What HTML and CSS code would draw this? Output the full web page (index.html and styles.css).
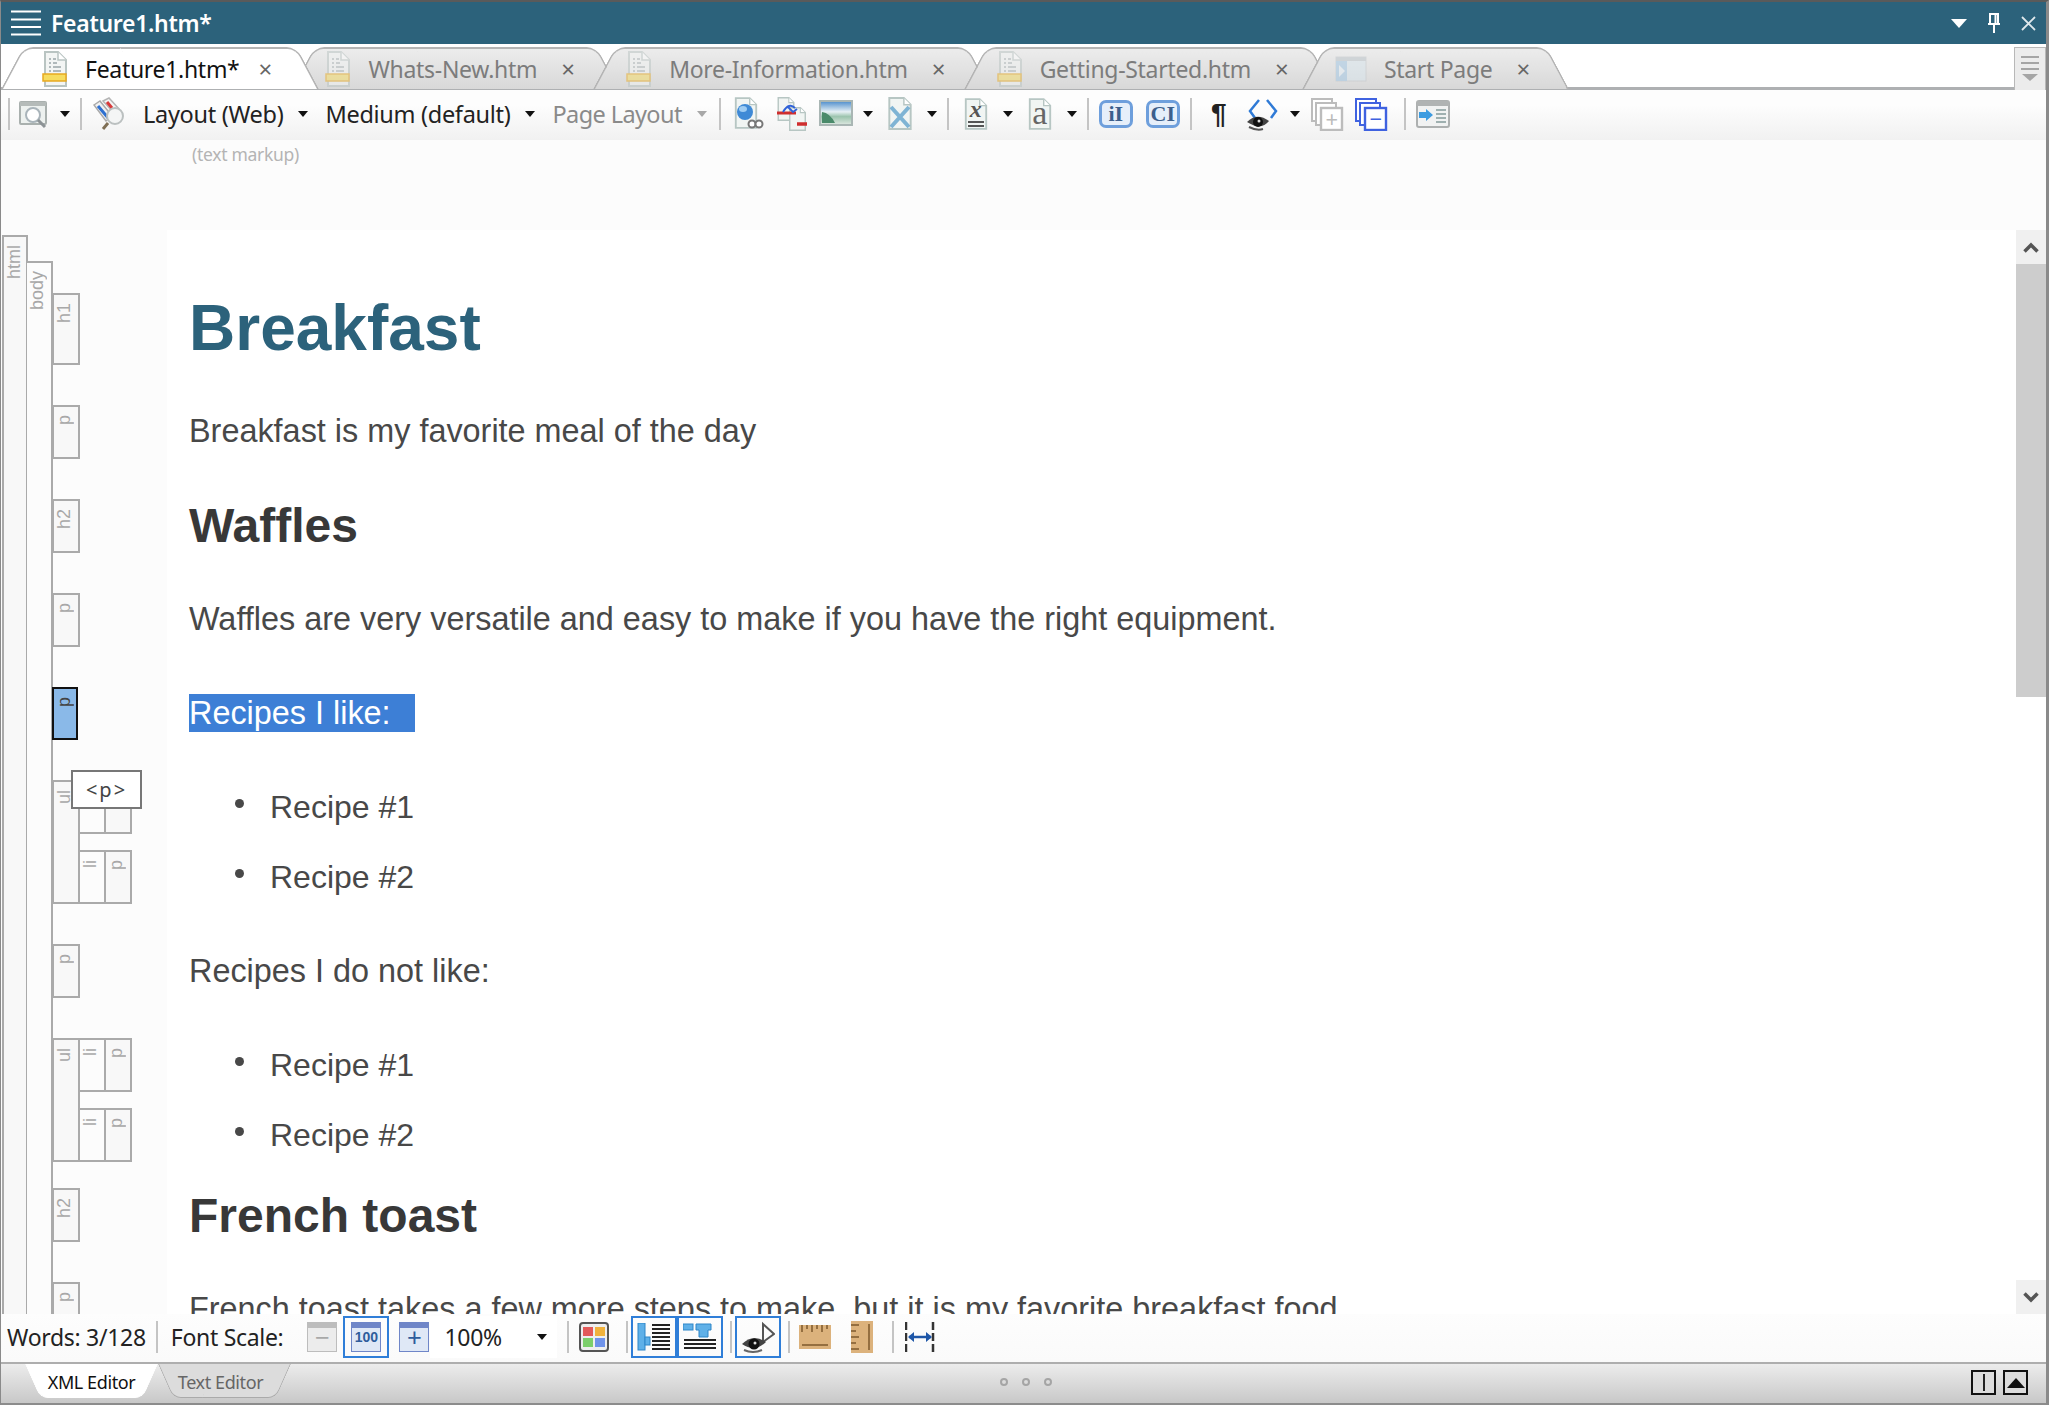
FILE: index.html
```html
<!DOCTYPE html>
<html lang="en">
<head>
    <meta charset="UTF-8">
    <title>Feature1.htm*</title>
    <link rel="stylesheet" href="styles.css">
</head>
<body>

    <svg class="sprite" xmlns="http://www.w3.org/2000/svg">
        <defs>
            <linearGradient id="sky" x1="0" y1="0" x2="0" y2="1">
                <stop offset="0" stop-color="#4a8bcb"/>
                <stop offset=".45" stop-color="#e6f0f4"/>
                <stop offset=".65" stop-color="#9cc4ae"/>
                <stop offset="1" stop-color="#dfe9e2"/>
            </linearGradient>
            <symbol id="arrow" viewBox="0 0 10 6"><path d="M0 0h10L5 6z" fill="#111"/></symbol>
            <symbol id="page" viewBox="0 0 26 36">
                <path d="M3 1h13l8 8v26H3z" fill="#f3f5f4" stroke="#b9c4c2" stroke-width="2"/>
                <path d="M16 1v8h8" fill="#fff" stroke="#b9c4c2" stroke-width="1.5"/>
                <path d="M7 8h2M11 8h3M7 12h2M11 12h4M7 16h2M11 16h8M7 20h2M11 20h8" stroke="#9aa5a8" stroke-width="1.5"/>
                <rect x="1" y="23" width="23" height="7" fill="#f6dc5f" stroke="#e8a920" stroke-width="1.5"/>
            </symbol>
            <symbol id="sheet" viewBox="0 0 28 34">
                <path d="M3 1h15l7 7v25H3z" fill="#f1f5f3" stroke="#b7c6c3" stroke-width="2"/>
                <path d="M18 1v7h7" fill="#fff" stroke="#b7c6c3" stroke-width="1.5"/>
            </symbol>
            <symbol id="stack" viewBox="0 0 34 34">
                <rect x="2" y="2" width="20" height="22" fill="#fff" stroke="currentColor" stroke-width="2"/>
                <rect x="6" y="6" width="20" height="22" fill="#fff" stroke="currentColor" stroke-width="2"/>
                <rect x="11" y="11" width="21" height="22" fill="#fff" stroke="currentColor" stroke-width="2.4"/>
            </symbol>
        </defs>
    </svg>

    <div class="app">
        <header class="title-bar">
            <svg class="hamburger" width="30" height="26" viewBox="0 0 30 26"><path d="M0 1.5h30M0 9.5h30M0 17h30M0 24.5h30" stroke="#fff" stroke-width="2"/></svg>
            <span class="title-text">Feature1.htm*</span>
            <div class="title-actions">
                <svg width="16" height="9" viewBox="0 0 16 9"><path d="M0 0h16L8 9z" fill="#fff"/></svg>
                <svg width="14" height="20" viewBox="0 0 14 20"><path d="M3 1h8v10H3zM1 11h12M7 11v9M8.500 2v8" stroke="#fff" stroke-width="2" fill="none"/></svg>
                <svg width="15" height="15" viewBox="0 0 15 15"><path d="M1 1l13 13M14 1L1 14" stroke="#dfe8ec" stroke-width="1.800"/></svg>
            </div>
        </header>

        <nav class="tab-strip">
            <div class="tab active">
                <svg class="tab-icon" width="26" height="36"><use href="#page"/></svg>
                <span class="tab-label">Feature1.htm*</span>
                <span class="tab-close">×</span>
            </div>
            <div class="tab">
                <svg class="tab-icon" width="26" height="36"><use href="#page"/></svg>
                <span class="tab-label">Whats-New.htm</span>
                <span class="tab-close">×</span>
            </div>
            <div class="tab">
                <svg class="tab-icon" width="26" height="36"><use href="#page"/></svg>
                <span class="tab-label">More-Information.htm</span>
                <span class="tab-close">×</span>
            </div>
            <div class="tab">
                <svg class="tab-icon" width="26" height="36"><use href="#page"/></svg>
                <span class="tab-label">Getting-Started.htm</span>
                <span class="tab-close">×</span>
            </div>
            <div class="tab start-tab">
                <svg class="tab-icon" width="32" height="26" viewBox="0 0 32 26"><rect x="1" y="1" width="30" height="24" fill="#d9e6ee" stroke="#c2c8cc"/><rect x="1" y="1" width="30" height="4" fill="#b9c2c8"/><rect x="1" y="5" width="11" height="20" fill="#9fc6e4"/><path d="M4 9l6 6-6 6z" fill="#e6f0f7"/></svg>
                <span class="tab-label">Start Page</span>
                <span class="tab-close">×</span>
            </div>
            <div class="overflow-btn">
                <svg width="18" height="26" viewBox="0 0 18 26"><path d="M0 1h18M0 7h18M0 13h18" stroke="#a5a5a5" stroke-width="2"/><path d="M1 18h16l-8 7z" fill="#a5a5a5"/></svg>
            </div>
        </nav>

        <div class="toolbar">
            <i class="sep"></i>
            <svg class="tool first" width="34" height="32" viewBox="0 0 34 32"><rect x="4" y="4" width="26" height="22" rx="1" fill="#edf1ef" stroke="#a9b0ae" stroke-width="2"/><rect x="4" y="4" width="26" height="4" fill="#b5bbb9"/><circle cx="17" cy="17" r="7" fill="#fff" stroke="#a9b4ba" stroke-width="2"/><path d="M22 22l7 7" stroke="#8d9396" stroke-width="3"/></svg>
            <svg class="drop" width="10" height="6"><use href="#arrow"/></svg>
            <i class="sep"></i>
            <svg class="tool" width="34" height="34" viewBox="0 0 34 34"><path d="M2 8l6-4 12 15-6 5z" fill="#f1f1f1" stroke="#a9a9a9" stroke-width="1.500"/><path d="M6 9l11 13" stroke="#2d6fd0" stroke-width="3"/><path d="M11 4l6-3 10 11-5 4z" fill="#f4f4f4" stroke="#b5b5b5" stroke-width="1.500"/><path d="M15 5l5 6" stroke="#d83a3a" stroke-width="3"/><circle cx="23" cy="19" r="8" fill="#f4f5f5" stroke="#bbc0c0" stroke-width="2"/><path d="M16 26l-5 6" stroke="#7f6f55" stroke-width="3"/></svg>
            <span class="tool-text">Layout (Web)</span>
            <svg class="drop" width="10" height="6"><use href="#arrow"/></svg>
            <span class="tool-text">Medium (default)</span>
            <svg class="drop" width="10" height="6"><use href="#arrow"/></svg>
            <span class="tool-text muted">Page Layout</span>
            <svg class="drop" width="10" height="6" opacity=".35"><use href="#arrow"/></svg>
            <i class="sep after-text"></i>
            <svg class="tool" width="34" height="34" viewBox="0 0 34 34"><use href="#sheet" width="26" height="32" x="2" y="0"/><circle cx="14" cy="15" r="8" fill="#3f8ad6"/><ellipse cx="12" cy="12" rx="4" ry="3" fill="#9fcdf3"/><circle cx="21" cy="27" r="3.500" fill="#fff" stroke="#777" stroke-width="2"/><circle cx="28" cy="27" r="3.500" fill="#fff" stroke="#777" stroke-width="2"/></svg>
            <svg class="tool" width="34" height="34" viewBox="0 0 34 34"><use href="#sheet" width="20" height="24" x="1" y="0"/><use href="#sheet" width="21" height="24" x="12" y="10"/><path d="M2 16h19" stroke="#cf2e2e" stroke-width="3"/><path d="M22 27h10" stroke="#cf2e2e" stroke-width="3.500"/><path d="M8 15q6-10 12-4M12 9l6 6 4-3" stroke="#2f62d8" stroke-width="2" fill="none"/></svg>
            <svg class="tool" width="34" height="28" viewBox="0 0 34 28"><rect x="1" y="1" width="32" height="24" fill="url(#sky)" stroke="#a9b6b4" stroke-width="2"/><path d="M3 12q8 1 13 11H3z" fill="#4a8a6a"/></svg>
            <svg class="drop" width="10" height="6"><use href="#arrow"/></svg>
            <svg class="tool" width="34" height="34" viewBox="0 0 34 34"><use href="#sheet" width="28" height="33" x="3" y="0"/><path d="M8 10l18 20M26 10L8 30" stroke="#7fb4d4" stroke-width="4"/></svg>
            <svg class="drop" width="10" height="6"><use href="#arrow"/></svg>
            <i class="sep"></i>
            <div class="sheet-tool">
                <svg width="26" height="34"><use href="#sheet"/></svg>
                <span class="sheet-letter italic">x</span>
                <i class="double-rule"></i>
            </div>
            <svg class="drop" width="10" height="6"><use href="#arrow"/></svg>
            <div class="sheet-tool">
                <svg width="26" height="34"><use href="#sheet"/></svg>
                <span class="sheet-letter big">a</span>
            </div>
            <svg class="drop" width="10" height="6"><use href="#arrow"/></svg>
            <i class="sep"></i>
            <div class="tool badge">iI</div>
            <div class="tool badge">CI</div>
            <i class="sep"></i>
            <div class="tool pilcrow">¶</div>
            <svg class="tool" width="34" height="34" viewBox="0 0 34 34"><path d="M13 3L4 14l5 7M21 3l9 11-5 7" stroke="#2f7ad6" stroke-width="2.500" fill="none"/><path d="M1 25q10-10 22-1-8 10-22 1z" fill="#444"/><ellipse cx="12" cy="25" rx="5" ry="5" fill="#111"/><circle cx="13" cy="24" r="1.500" fill="#ddd"/><path d="M3 30q8 4 14 2" stroke="#555" stroke-width="2" fill="none"/></svg>
            <svg class="drop" width="10" height="6"><use href="#arrow"/></svg>
            <div class="tool stack-tool grey">
                <svg width="34" height="34"><use href="#stack"/></svg>
                <span class="stack-sign">+</span>
            </div>
            <div class="tool stack-tool blue">
                <svg width="34" height="34"><use href="#stack"/></svg>
                <span class="stack-sign">−</span>
            </div>
            <i class="sep wide"></i>
            <svg class="tool" width="34" height="28" viewBox="0 0 34 28"><rect x="1" y="1" width="32" height="26" rx="2" fill="#f1f2f2" stroke="#adb0b0" stroke-width="2"/><rect x="1" y="1" width="32" height="5" fill="#b0b3b3"/><path d="M3 12h7V9l7 6-7 6v-3H3z" fill="#3c9be0"/><path d="M20 10h10M20 14h10M20 18h10M20 22h10" stroke="#9fb0b0" stroke-width="2"/></svg>
        </div>

        <div class="markup-band">(text markup)</div>

        <main class="editor">
            <aside class="tag-rail">
                <div class="node node-html">
                    <span class="node-name">html</span>
                </div>
                <div class="node node-body">
                    <span class="node-name">body</span>
                </div>
                <div class="tag-column">
                    <div class="node tag tag-h1"><span class="node-name">h1</span></div>
                    <div class="node tag"><span class="node-name">p</span></div>
                    <div class="node tag"><span class="node-name">h2</span></div>
                    <div class="node tag"><span class="node-name">p</span></div>
                    <div class="node tag selected"><span class="node-name">p</span></div>
                    <div class="tag-list">
                        <div class="node tag list-tag"><span class="node-name">ul</span></div>
                        <div class="tag-rows">
                            <div class="tag-row">
                                <div class="node tag"><span class="node-name">li</span></div>
                                <div class="node tag"><span class="node-name">p</span></div>
                            </div>
                            <div class="tag-row">
                                <div class="node tag"><span class="node-name">li</span></div>
                                <div class="node tag"><span class="node-name">p</span></div>
                            </div>
                        </div>
                    </div>
                    <div class="node tag"><span class="node-name">p</span></div>
                    <div class="tag-list">
                        <div class="node tag list-tag"><span class="node-name">ul</span></div>
                        <div class="tag-rows">
                            <div class="tag-row">
                                <div class="node tag"><span class="node-name">li</span></div>
                                <div class="node tag"><span class="node-name">p</span></div>
                            </div>
                            <div class="tag-row">
                                <div class="node tag"><span class="node-name">li</span></div>
                                <div class="node tag"><span class="node-name">p</span></div>
                            </div>
                        </div>
                    </div>
                    <div class="node tag close-up"><span class="node-name">h2</span></div>
                    <div class="node tag"><span class="node-name">p</span></div>
                </div>
                <div class="tag-tooltip">&lt;p&gt;</div>
            </aside>

            <article class="doc">
                <h1>Breakfast</h1>
                <p>Breakfast is my favorite meal of the day</p>
                <h2>Waffles</h2>
                <p>Waffles are very versatile and easy to make if you have the right equipment.</p>
                <p><span class="picked">Recipes I like:</span></p>
                <ul>
                    <li>Recipe #1</li>
                    <li>Recipe #2</li>
                </ul>
                <p>Recipes I do not like:</p>
                <ul>
                    <li>Recipe #1</li>
                    <li>Recipe #2</li>
                </ul>
                <h2 class="close-up">French toast</h2>
                <p>French toast takes a few more steps to make, but it is my favorite breakfast food.</p>
            </article>

            <div class="scrollbar">
                <div class="scroll-btn">
                    <svg width="16" height="11" viewBox="0 0 16 11"><path d="M1.500 9.500L8 3l6.500 6.500" stroke="#555" stroke-width="3.500" fill="none"/></svg>
                </div>
                <div class="scroll-thumb"></div>
                <div class="scroll-track"></div>
                <div class="scroll-btn">
                    <svg width="16" height="11" viewBox="0 0 16 11"><path d="M1.500 1.500L8 8l6.500-6.500" stroke="#555" stroke-width="3.500" fill="none"/></svg>
                </div>
            </div>
        </main>

        <div class="status-bar">
            <span class="status-text">Words: 3/128</span>
            <i class="sep"></i>
            <span class="status-text">Font Scale:</span>
            <div class="scale-btn grey"><span class="scale-sign">−</span></div>
            <div class="toggle">
                <div class="scale-btn"><span class="scale-hundred">100</span></div>
            </div>
            <div class="scale-btn"><span class="scale-sign">+</span></div>
            <div class="zoom-select">
                <span class="status-text">100%</span>
                <svg width="10" height="6"><use href="#arrow"/></svg>
            </div>
            <i class="sep"></i>
            <svg class="palette" width="30" height="30" viewBox="0 0 30 30"><rect x="1" y="1" width="28" height="28" rx="3" fill="#eee" stroke="#555" stroke-width="2"/><rect x="4" y="5" width="10" height="9" fill="#e25a5a"/><rect x="16" y="5" width="10" height="9" fill="#f0b23c"/><rect x="4" y="16" width="10" height="9" fill="#7ccf6a"/><rect x="16" y="16" width="10" height="9" fill="#6f93ea"/></svg>
            <i class="sep"></i>
            <div class="toggle-group">
                <div class="toggle">
                    <svg width="34" height="28" viewBox="0 0 34 28"><rect x="1" y="0" width="7" height="27" fill="#5fb0e8" stroke="#2f86c8"/><rect x="8" y="14" width="5" height="8" fill="#5fb0e8" stroke="#2f86c8"/><path d="M15 2h18M15 6h18M15 10h18M15 14h18M15 18h18M15 22h18M15 26h18" stroke="#222" stroke-width="2"/></svg>
                </div>
                <div class="toggle">
                    <svg width="34" height="28" viewBox="0 0 34 28"><rect x="0" y="1" width="10" height="6" fill="#5fb0e8" stroke="#2f86c8"/><path d="M13 1h15v6h-3v7h-9V7h-3z" fill="#5fb0e8" stroke="#2f86c8"/><path d="M1 17h32M1 21h32M1 25h32" stroke="#222" stroke-width="2"/></svg>
                </div>
            </div>
            <i class="sep"></i>
            <div class="toggle">
                <svg width="34" height="32" viewBox="0 0 34 32"><path d="M22 22V3l11 10-11 8" stroke="#555" stroke-width="2" fill="none"/><path d="M1 23q11-11 24-2-11 11-24 2z" fill="#444"/><circle cx="13" cy="23" r="5.500" fill="#111"/><circle cx="14" cy="22" r="1.500" fill="#ddd"/><path d="M3 29q9 4 18 0" stroke="#666" stroke-width="2" fill="none"/></svg>
            </div>
            <i class="sep"></i>
            <svg class="ruler" width="32" height="24" viewBox="0 0 32 24"><rect width="32" height="24" fill="#dcb27c"/><path d="M3 0v7M8 0v4M13 0v7M18 0v4M23 0v7M28 0v4M3 20h26" stroke="#7d5a2c" stroke-width="1.500" stroke-dasharray="none"/></svg>
            <svg class="ruler-v" width="22" height="32" viewBox="0 0 22 32"><rect width="22" height="32" fill="#dcb27c"/><path d="M0 4h8M0 10h5M0 16h8M0 22h5M0 28h8M18 3v26" stroke="#7d5a2c" stroke-width="1.500"/></svg>
            <i class="sep"></i>
            <svg class="fit-width" width="30" height="30" viewBox="0 0 30 30"><path d="M1 0v8M1 11v8M1 22v8M28 0v8M28 11v8M28 22v8" stroke="#333" stroke-width="2.500"/><path d="M4 15h22" stroke="#1f57a8" stroke-width="2.500"/><path d="M3 15l6-5v10zM27 15l-6-5v10z" fill="#1f57a8"/></svg>
        </div>

        <footer class="view-tabs">
            <div class="view-tab active"><span>XML Editor</span></div>
            <div class="view-tab"><span>Text Editor</span></div>
            <div class="grip"><i></i><i></i><i></i></div>
            <div class="split-btns">
                <div class="split-btn"><i class="split-bar"></i></div>
                <div class="split-btn"><svg width="18" height="10" viewBox="0 0 18 10"><path d="M9 0l9 10H0z" fill="#111"/></svg></div>
            </div>
        </footer>
    </div>

</body>
</html>
```

FILE: styles.css
```css
* {
    box-sizing: border-box;
}

html,
body {
    margin: 0;
    height: 100%;
    overflow: hidden;
    background-color: #fff;
}

body {
    font-family: "Noto Sans", "Open Sans", sans-serif;
    color: #222;
}

.sprite {
    display: block;
    width: 0;
    height: 0;
}

svg {
    flex: none;
    display: block;
}

.app {
    height: 1405px;
    display: flex;
    flex-direction: column;
    border-top: 2px solid #5a5a5a;
    border-left: 1px solid #8a8a8a;
    border-right: 3px solid #8a8a8a;
}

/* title bar */
.title-bar {
    height: 42px;
    flex: none;
    display: flex;
    align-items: center;
    padding: 0 10px 0 10px;
    background-color: #2c627b;
    color: #fff;
}

.title-text {
    margin-left: 10px;
    font-size: 23px;
    font-weight: 600;
    letter-spacing: -0.3px;
}

.title-actions {
    margin-left: auto;
    display: flex;
    align-items: center;
    gap: 20px;
}

/* document tabs */
.tab-strip {
    height: 46px;
    flex: none;
    display: flex;
    align-items: flex-end;
    padding-top: 3px;
    background-color: #fff;
    border-bottom: 3px solid #aeb0b2;
    position: relative;
}

.tab {
    height: 42px;
    display: flex;
    align-items: center;
    position: relative;
    margin-left: -26px;
    margin-bottom: -2px;
    padding: 2px 44px 0 33px;
    color: #7c7c7c;
}

.tab:first-child {
    margin-left: 0;
    padding-left: 41px;
    padding-right: 46px;
}

.tab:first-child .tab-close {
    margin-left: 19px;
}

.tab.start-tab {
    margin-left: -31px;
    padding-right: 39px;
}

.tab::before,
.tab::after {
    content: "";
    position: absolute;
    top: 0;
    bottom: 0;
    width: 55%;
    background: linear-gradient(#ececec, #d8d8d8);
    border-top: 2px solid #b4b4b4;
}

.tab::before {
    left: 0;
    border-left: 2px solid #b4b4b4;
    border-top-left-radius: 10px;
    transform: skewX(-28deg);
    transform-origin: bottom left;
}

.tab::after {
    right: 0;
    border-right: 2px solid #b4b4b4;
    border-top-right-radius: 10px;
    transform: skewX(28deg);
    transform-origin: bottom right;
}

.tab.active {
    z-index: 2;
    color: #111;
}

.tab.active::before,
.tab.active::after {
    background: #fff;
}

.tab > * {
    position: relative;
    z-index: 1;
}

.tab-icon {
    opacity: 0.5;
}

.tab.active .tab-icon {
    opacity: 1;
}

.tab-label {
    margin-left: 17px;
    font-size: 23px;
    letter-spacing: -0.3px;
    white-space: nowrap;
}

.tab-close {
    width: 14px;
    margin-left: 24px;
    font-size: 24px;
    line-height: 1;
    text-align: center;
    color: #666;
}

.overflow-btn {
    width: 32px;
    height: 43px;
    margin-left: auto;
    display: flex;
    justify-content: center;
    align-items: center;
    margin-bottom: -3px;
    background-color: #ececec;
    border: 1px solid #b8b8b8;
    border-bottom: none;
    z-index: 3;
}

/* top toolbar */
.toolbar {
    height: 50px;
    flex: none;
    display: flex;
    align-items: center;
    gap: 10px;
    padding: 0 0 2px 7px;
    background: linear-gradient(#fdfdfd 30%, #f1f1f1);
}

.sep {
    flex: none;
    width: 2px;
    height: 32px;
    background-color: #c4c4c4;
}

.sep.after-text {
    margin-left: 2px;
}

.sep.wide {
    margin-left: 6px;
}

.tool {
    flex: none;
    width: 34px;
}

.tool.first {
    margin-left: -4px;
}

.tool-text {
    margin-left: 7px;
    font-size: 23.5px;
    letter-spacing: -0.3px;
    white-space: nowrap;
}

.tool-text + .drop {
    margin-left: 5px;
}

.tool-text.muted {
    color: #8a8a8a;
    letter-spacing: -0.6px;
}

.sheet-tool {
    width: 34px;
    height: 34px;
    flex: none;
    display: flex;
    justify-content: center;
    position: relative;
}

.sheet-letter {
    position: absolute;
    left: 0;
    right: 0;
    top: 3px;
    text-align: center;
    font-family: "Liberation Serif", serif;
    font-size: 24px;
    line-height: 24px;
    font-weight: bold;
    color: #555;
}

.sheet-letter.italic {
    top: 0;
    font-style: italic;
}

.sheet-letter.big {
    top: 4px;
    font-size: 34px;
    font-weight: normal;
    color: #666;
}

.double-rule {
    position: absolute;
    left: 9px;
    right: 9px;
    top: 24px;
    height: 6px;
    border-top: 2px solid #555;
    border-bottom: 2px solid #555;
}

.badge {
    height: 28px;
    display: flex;
    justify-content: center;
    align-items: center;
    font-family: "Liberation Serif", serif;
    font-size: 22px;
    font-weight: bold;
    color: #3c5f8c;
    background-color: #e6effa;
    border: 3px solid #6e9fdc;
    border-radius: 7px;
}

.badge + .badge {
    margin-left: 3px;
}

.pilcrow {
    font-family: "Liberation Sans", sans-serif;
    font-size: 28px;
    font-weight: bold;
    line-height: 34px;
    text-align: center;
    color: #222;
}

.stack-tool {
    position: relative;
    height: 34px;
}

.stack-tool.grey {
    color: #bcbcbc;
}

.stack-tool.blue {
    color: #3f62e0;
}

.stack-sign {
    position: absolute;
    left: 12px;
    width: 20px;
    top: 9px;
    font-size: 22px;
    line-height: 24px;
    text-align: center;
}

/* band above the document */
.markup-band {
    height: 90px;
    flex: none;
    padding: 2px 0 0 191px;
    font-size: 17.5px;
    color: #b4b4b4;
    letter-spacing: -0.3px;
    background-color: #fcfcfc;
}

/* editor area */
.editor {
    flex: 1;
    min-height: 0;
    display: flex;
}

.tag-rail {
    width: 166px;
    flex: none;
    display: flex;
    align-items: flex-start;
    height: 100%;
    overflow: hidden;
    padding-left: 1px;
    position: relative;
    background-color: #fcfcfc;
}

.node {
    flex: none;
    display: block;
    border: 2px solid #aaa;
    background-color: #f8f8f8;
    position: relative;
}

.node-name {
    display: block;
    padding-bottom: 8px;
    writing-mode: vertical-rl;
    transform: rotate(180deg);
    font-family: "Liberation Sans", sans-serif;
    font-size: 18px;
    line-height: 22px;
    color: #a8a8a8;
    position: absolute;
    left: -1px;
    top: 0;
}

.node-html {
    width: 26px;
    height: 1100px;
    margin-top: 5px;
}

.node-body {
    width: 26px;
    height: 1100px;
    margin-top: 31px;
    margin-left: -1px;
    border-left: none;
    background-color: #fcfcfc;
}

.tag-column {
    width: 120px;
    margin-top: 63px;
    margin-left: -1px;
    display: flex;
    flex-direction: column;
    gap: 40px;
}

.tag {
    width: 28px;
    height: 54px;
}

.tag-h1 {
    height: 72px;
}

.tag.selected {
    height: 53px;
    width: 26px;
    border-color: #111;
    background-color: #8ab9e8;
}

.tag.selected .node-name {
    color: #444;
}

.close-up {
    margin-top: -14px;
}

.tag-list {
    display: flex;
}

.tag.list-tag {
    height: auto;
}

.tag-rows {
    display: flex;
    flex-direction: column;
    gap: 16px;
}

.tag-row {
    display: flex;
}

.tag-row .tag {
    margin-left: -2px;
}

.tag-row .tag:first-child {
    background-color: #fcfcfc;
}

.tag-tooltip {
    position: absolute;
    left: 70px;
    top: 540px;
    width: 71px;
    height: 39px;
    font-size: 20px;
    line-height: 35px;
    letter-spacing: 2px;
    text-align: center;
    color: #444;
    background-color: #fff;
    border: 2px solid #777;
}

.doc {
    flex: 1;
    min-width: 0;
    height: 100%;
    overflow: hidden;
    padding-left: 22px;
    display: flex;
    flex-direction: column;
    gap: 40px;
    font-family: "Liberation Sans", Arial, sans-serif;
    font-size: 32.4px;
    line-height: 52px;
    color: #484848;
    background-color: #fff;
}

.doc > * {
    flex: none;
    margin: 0;
}

.doc p {
    padding-bottom: 2px;
}

.doc h1 {
    margin-top: 62px;
    padding-bottom: 1px;
    font-size: 64px;
    line-height: 72px;
    color: #2c627b;
}

.doc h2 {
    font-size: 48px;
    line-height: 54px;
    color: #383838;
}

.doc h2.close-up {
    margin-top: -14px;
}

.doc ul {
    padding-left: 46px;
    display: flex;
    flex-direction: column;
    gap: 16px;
    list-style: none;
}

.doc li {
    display: flex;
    align-items: center;
    padding-bottom: 2px;
    font-size: 32px;
}

.doc li::before {
    content: "";
    width: 9px;
    height: 9px;
    margin: -7px 26px 0 0;
    border-radius: 50%;
    background-color: #484848;
}

.picked {
    display: inline-block;
    width: 226px;
    line-height: 38px;
    color: #fff;
    background-color: #3d7fd6;
}

/* scrollbar */
.scrollbar {
    width: 30px;
    flex: none;
    display: flex;
    flex-direction: column;
}

.scroll-btn {
    height: 34px;
    flex: none;
    display: flex;
    justify-content: center;
    align-items: center;
    background-color: #f0f0f0;
}

.scroll-thumb {
    height: 433px;
    flex: none;
    background-color: #cdcdcd;
}

.scroll-track {
    flex: 1;
}

/* bottom toolbar */
.status-bar {
    height: 50px;
    flex: none;
    display: flex;
    align-items: center;
    gap: 10px;
    padding: 0 0 2px 6px;
    background: linear-gradient(#fdfdfd, #fafafa);
    border-bottom: 2px solid #aeaeae;
}

.status-bar .sep + .status-text {
    margin-left: 3px;
}

.status-text {
    font-size: 23px;
    letter-spacing: -0.3px;
    white-space: nowrap;
}

.scale-btn {
    width: 30px;
    height: 30px;
    flex: none;
    display: flex;
    justify-content: center;
    align-items: center;
    color: #2f5d9c;
    background: linear-gradient(#6f86c8 5px, #dfe8f6 5px);
    border: 1px solid #6f86c8;
}

.scale-btn.grey {
    margin-left: 14px;
    color: #a8a8a8;
    background: linear-gradient(#bdbdbd 5px, #ececec 5px);
    border-color: #bdbdbd;
}

.scale-btn.grey + .toggle {
    margin-left: -4px;
}

.scale-sign {
    font-size: 26px;
    line-height: 24px;
}

.scale-hundred {
    font-family: "Liberation Sans", sans-serif;
    font-size: 14px;
    font-weight: bold;
    color: #2f5d9c;
}

.toggle {
    width: 46px;
    height: 42px;
    flex: none;
    display: flex;
    justify-content: center;
    align-items: center;
    border: 2px solid #2f7ed8;
}

.toggle-group {
    display: flex;
}

.zoom-select {
    width: 127px;
    height: 42px;
    flex: none;
    margin-left: -9px;
    padding: 0 10px 0 14px;
    display: flex;
    justify-content: space-between;
    align-items: center;
    background-color: #fff;
}

.palette + .sep {
    margin-left: 7px;
}

.palette + .sep + .toggle-group {
    margin-left: -7px;
}

.toggle-group + .sep,
.toggle-group + .sep + .toggle + .sep {
    margin-left: -3px;
}

.toggle-group + .sep + .toggle {
    margin-left: -7px;
}

.ruler {
    margin-left: -1px;
}

.ruler-v {
    margin-left: 10px;
}

.ruler-v + .sep {
    margin-left: 9px;
}

.fit-width {
    margin-left: 1px;
}

/* bottom view tabs */
.view-tabs {
    height: 41px;
    flex: none;
    display: flex;
    padding-left: 24px;
    position: relative;
    background: linear-gradient(#ececec, #c8c8c8);
    border-bottom: 2px solid #8c8c8c;
}

.view-tab {
    width: 133px;
    height: 34px;
    padding-top: 2px;
    display: flex;
    justify-content: center;
    align-items: center;
    font-size: 18px;
    letter-spacing: -0.4px;
    color: #666;
    position: relative;
}

.view-tab:not(.active) {
    padding-right: 8px;
}

.view-tab span {
    position: relative;
    z-index: 1;
}

.view-tab::before,
.view-tab::after {
    content: "";
    position: absolute;
    top: 0;
    bottom: 0;
    width: 55%;
    background-color: #dcdcdc;
    border-bottom: 1px solid #aaa;
}

.view-tab::before {
    left: 0;
    border-left: 1px solid #aaa;
    border-bottom-left-radius: 8px;
    transform: skewX(24deg);
    transform-origin: top left;
}

.view-tab::after {
    right: 0;
    border-right: 1px solid #aaa;
    border-bottom-right-radius: 8px;
    transform: skewX(-24deg);
    transform-origin: top right;
}

.view-tab.active {
    color: #111;
    z-index: 1;
}

.view-tab.active::before,
.view-tab.active::after {
    background-color: #fff;
    border-color: #fff;
}

.grip {
    position: absolute;
    left: 999px;
    top: 14px;
    display: flex;
    gap: 14px;
}

.grip i {
    width: 8px;
    height: 8px;
    border: 2px solid #a5a5a5;
    border-radius: 50%;
}

.split-btns {
    margin-left: auto;
    margin-right: 18px;
    margin-top: 6px;
    display: flex;
    gap: 7px;
}

.split-btn {
    width: 25px;
    height: 25px;
    display: flex;
    justify-content: center;
    align-items: center;
    background-color: #dcdcdc;
    border: 2px solid #111;
}

.split-bar {
    width: 2px;
    height: 17px;
    background-color: #222;
}
```
